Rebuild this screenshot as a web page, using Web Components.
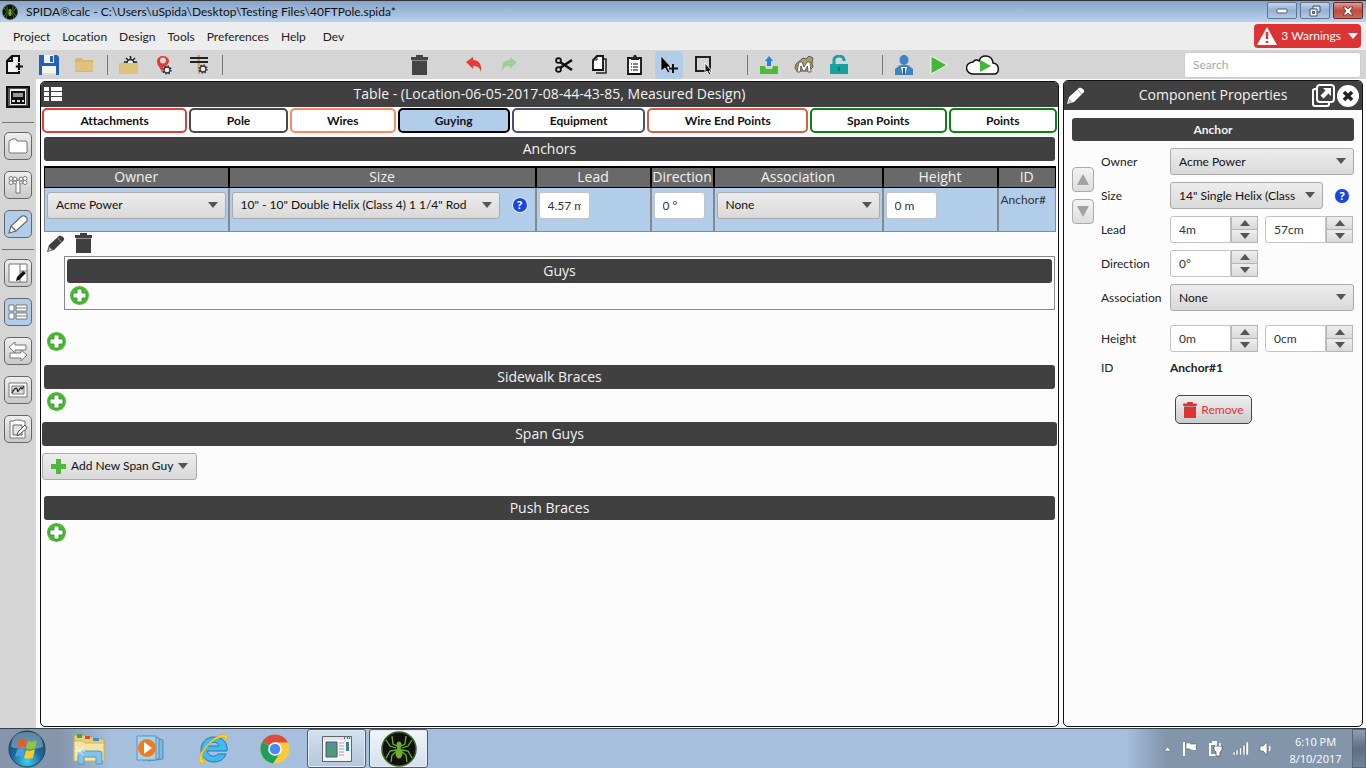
<!DOCTYPE html>
<html lang="en">
<head>
<meta charset="utf-8">
<title>SPIDA calc</title>
<style>
html,body{margin:0;height:100%}
body{font:12px/16px Lato,"Open Sans",sans-serif;font-variant-ligatures:none;color:#222;background:#fcfcfc}
</style>
</head>
<body>
<spida-app></spida-app>
<script>
const icons = {
  spider: [36,36,'<circle cx="18" cy="18" r="17" fill="#101010" stroke="#3f5f1c" stroke-width="1.5"/><g fill="none" stroke="#6cb02c" stroke-width="1.3"><path d="M16 15l-4-2-1-8M20 15l4-2 1-8M15 17l-6-2-4-6M21 17l6-2 4-6M15 19l-6 1-4 7M21 19l6 1 4 7M16 20l-5 4-1 7M20 20l5 4 1 7"/></g><ellipse cx="18" cy="14" rx="2.500" ry="3.500" fill="#6cb02c"/><ellipse cx="18" cy="22" rx="3.500" ry="5.500" fill="#6cb02c"/>'],
  newFile: [19,20,'<path d="M7 1h7v17H2V6z" fill="#f4f4f4"/><path d="M14 7V1H7L2 6v12h9M7 1v5H2M14 14v4h-3" fill="none" stroke="#111" stroke-width="2"/><path d="M14 7v9M10 11.500h9" stroke="#d5d5d5" stroke-width="4"/><path d="M14 8v7M11 11.500h7" stroke="#111" stroke-width="2"/>'],
  save: [20,20,'<path d="M0 0h18l2 2v18H0z" fill="#2261b8"/><path d="M5 0h10v8H5z" fill="#e9f1fb"/><path d="M11 1h3v6h-3z" fill="#2261b8"/><path d="M3 11h14v9H3z" fill="#f4f4f4"/><path d="M3 19h14" stroke="#c8c8c8"/>'],
  folder: [18,15,'<path d="M0 2h1l1-1h5l1 2h10v12H0z" fill="#d5b868"/><path d="M0 5h18v9H0z" fill="#dfc37c"/>'],
  folderGear: [20,19,'<path d="M0 8h3l2-2h14v13H0z" fill="#dcc27a"/><path d="M6 8a5 5 0 0 1 11 0z" fill="#eee"/><path d="M8 8a3.500 3.500 0 0 1 7 0" fill="none" stroke="#222" stroke-width="1.500"/><path d="M11.500 1v3M7 3l2 2M16 3l-2 2M5 7h3M15 7h3" stroke="#222" stroke-width="1.600"/>'],
  pinGear: [16,20,'<path d="M6 18C5 13 1 11 1 6a6 5 0 0 1 12 0c0 2-2 4-3 6" fill="#e4383a"/><circle cx="7" cy="5.500" r="3" fill="#d8d8d8"/><circle cx="11" cy="15" r="4.500" fill="#eee"/><circle cx="11" cy="15" r="3" fill="none" stroke="#333" stroke-width="1.300"/><circle cx="11" cy="15" r="4" fill="none" stroke="#333" stroke-width="1.500" stroke-dasharray="1.500 1.640"/>'],
  poleGear: [18,19,'<path d="M7 0h3v19H8z" fill="#d7a552"/><path d="M0 3h18M0 7h18" stroke="#222" stroke-width="2"/><circle cx="13" cy="14" r="4.500" fill="#e8e8e8"/><circle cx="13" cy="14" r="3" fill="none" stroke="#333" stroke-width="1.300"/><circle cx="13" cy="14" r="4" fill="none" stroke="#333" stroke-width="1.500" stroke-dasharray="1.500 1.640"/>'],
  trash: [17,20,'<path d="M5 0h7v2h5v3H0V2h5z" fill="currentColor"/><path d="M1 6h15v14H1z" fill="currentColor"/><path d="M1 5.500h15" stroke="#777" stroke-width=".8"/>'],
  undo: [16,15,'<path d="M0 5l7-5v3c6 0 9 4 8 12-1-4-3-6-8-6v3z" fill="currentColor"/>'],
  redo: [16,15,'<path d="M16 5L9 0v3C3 3 0 7 1 15c1-4 3-6 8-6v3z" fill="currentColor"/>'],
  cut: [18,16,'<g fill="none" stroke="#111"><circle cx="3.500" cy="3.500" r="2.400" stroke-width="1.800"/><circle cx="3.500" cy="12.500" r="2.400" stroke-width="1.800"/><path d="M5 5l12 8M5 11l12-8" stroke-width="2.700"/></g>'],
  copy: [15,19,'<path d="M5 4h9v14H4" fill="#ddd" stroke="#222" stroke-width="1.500"/><path d="M5 1h6v14H1V5z" fill="#fff" stroke="#111" stroke-width="1.800"/><path d="M5 1v4H1" fill="none" stroke="#111"/>'],
  paste: [15,20,'<path d="M1 3h13v16H1z" fill="#fff" stroke="#111" stroke-width="1.800"/><path d="M4 2h2l1-2h2l1 2h2v3H4z" fill="#222"/><path d="M4 9h1M6 9h5M4 12h1M6 12h5M4 15h1M6 15h5" stroke="#555" stroke-width="1.300"/>'],
  cursorPlus: [18,18,'<path d="M1 0l10 11H7l3 5-2 1-3-5-4 3z" fill="#000" stroke="#eee" stroke-width=".7"/><path d="M13 8v9M9 12.500h9" stroke="#111" stroke-width="2"/>'],
  marquee: [18,18,'<path d="M1 1h14v14H1z" fill="none" stroke="#222" stroke-width="2"/><path d="M10 7l7 8h-3l2 3-2 1-2-4-2 2z" fill="#111" stroke="#fff" stroke-width=".9"/>'],
  upload: [18,18,'<path d="M0 10h5l1 3h6l1-3h5v8H0z" fill="#4dba38"/><path d="M9 0l4 5h-2v5H7V5H5z" fill="#2482e4"/>'],
  model: [20,18,'<path d="M2 8l7-6 3 1 3-3 4 2-1 5 1 4-4 4H3L1 12z" fill="#b59a62" stroke="#555"/><path d="M3 16L5 6h3l2 5 3-5h3l1 10h-3l-.5-6-3 5H9L7 10l-1 6z" fill="#fff" stroke="#555" stroke-width=".9"/>'],
  unlock: [18,19,'<path d="M4 9V5a5 4 0 0 1 10 0v1" fill="none" stroke="#15a3a1" stroke-width="3"/><path d="M0 9h18v10H0z" fill="#15a3a1"/><path d="M9 12v4" stroke="#0b6c6d" stroke-width="2"/>'],
  person: [18,20,'<ellipse cx="9" cy="5" rx="4.500" ry="5" fill="#3f83c5"/><path d="M0 20v-6l5-4h8l5 4v6z" fill="#3f83c5"/><path d="M6 12h6l-2 8H8z" fill="#fff"/><path d="M8 13h2v7H8z" fill="#335f8e"/>'],
  play: [18,20,'<path d="M1 1l16 9-16 9z" fill="#45b538" stroke="#eef5ee"/>'],
  cloudPlay: [34,20,'<path d="M8 19a7 6 0 0 1-1-12C9 4 12 5 13 6c2-7 13-7 14 2 7 1 7 11 1 11z" fill="#fff" stroke="#111" stroke-width="1.500"/><path d="M14 5l11 6-11 6z" fill="#45b538"/>'],
  calc: [24,22,'<path d="M1 1h22v20H1z" fill="#555" stroke="#111" stroke-width="2"/><path d="M4 3h16v16H4z" fill="#eee"/><path d="M5 5h14v13H5z" fill="#111"/><path d="M7 7h10v4H7z" fill="#999"/><path d="M6 15h3M11 15h3M16 15h2" stroke="#ddd" stroke-width="2"/>'],
  files: [20,16,'<path d="M1 14V3l2-1 1-1h4l1 2h9l1 1v10l-1 1H2z" fill="#fff" stroke="#777"/>'],
  pole: [20,18,'<path d="M8 4h4v13H8z" fill="#fff" stroke="#777"/><g fill="#fff" stroke="#777"><circle cx="3" cy="2.500" r="2"/><circle cx="7" cy="3" r="2"/><circle cx="13" cy="3" r="2"/><circle cx="17" cy="2.500" r="2"/><circle cx="3" cy="6.500" r="2"/><circle cx="7" cy="6.500" r="1.500"/><circle cx="13" cy="6.500" r="1.500"/><circle cx="17" cy="6.500" r="2"/></g><path d="M3 4.500h14" stroke="#999"/>'],
  pencilLine: [20,19,'<path d="M1 18l2-7L14 1c3-1 6 2 5 5L8 16zM3 11l5 5" fill="#fff" stroke="#666" stroke-width="1.200"/>'],
  design: [20,20,'<path d="M1 1h18v18H1zM12 1v18M12 8h7" fill="#fff" stroke="#777"/><path d="M8 18l1-4 6-6 3 2-7 7z" fill="#111"/>'],
  listLine: [20,16,'<path d="M1 1h5v6H1zM8 1h11v6H8zM1 9h5v6H1zM8 9h11v6H8zM8 4h11M8 12h11" fill="#fff" stroke="#777"/>'],
  swap: [20,20,'<path d="M1 6l6-5v3h11v5H7v3zM19 14l-6-5v3H2v5h11v3z" fill="#fff" stroke="#777"/>'],
  chart: [20,16,'<path d="M1 1h18v14H1z" fill="#fff" stroke="#777"/><path d="M4 4h12v8H4z" fill="#ddd" stroke="#777"/><path d="M4 11c2-4 4-6 5-4s0 4 2 1 2-3 3-1l2-3" fill="none" stroke="#222" stroke-width="1.300"/>'],
  note: [20,20,'<path d="M2 2h4l1-1h6l1 1h3v17H2z" fill="#fff" stroke="#777"/><path d="M5 6h9v10H5z" fill="#e4e4e4" stroke="#666"/><path d="M9 17l1-4 7-7 2 3-7 6z" fill="#fff" stroke="#555"/>'],
  list: [18,15,'<path d="M0 0h5v4H0zM7 0h11v4H7zM0 5h5v4H0zM7 5h11v4H7zM0 10h5v4H0zM7 10h11v4H7z" fill="#fff"/>'],
  pencil: [18,17,'<path d="M0 17l2-7L12 1c2-1 6 2 5 4L7 15z" fill="currentColor"/><path d="M11 3l4 5" stroke="#999" stroke-width="1"/><path d="M1 16l1.500-4 3 3z" fill="#bbb"/>'],
  popout: [23,23,'<path d="M5 5H3q-2 0-2 2v13q0 2 2 2h12q2 0 2-2v-2" fill="none" stroke="#fff" stroke-width="2"/><rect x="5" y="1" width="17" height="17" rx="3" fill="#404040" stroke="#fff" stroke-width="2"/><path d="M11 4h8v8l-2.500-2.500-5 5-3-3 5-5z" fill="#fff"/>'],
  closeRound: [22,22,'<circle cx="11" cy="11" r="11" fill="#fff"/><path d="M7 7l8 8M15 7l-8 8" stroke="#222" stroke-width="3.500"/>'],
  addRound: [19,19,'<circle cx="9.500" cy="9.500" r="9.500" fill="#4cb935"/><path d="M7 3h5v4h4v5h-4v4H7v-4H3V7h4z" fill="#fff" stroke="#278d1d" stroke-width=".8"/>'],
  add: [15,15,'<path d="M5 0h5v5h5v5h-5v5H5v-5H0V5h5z" fill="#4db83d"/>'],
  down: [10,6,'<path d="M0 0h10L5 6z" fill="currentColor"/>'],
  up: [10,6,'<path d="M0 6h10L5 0z" fill="currentColor"/>'],
  bigUp: [12,11,'<path d="M0 11h12L6 0z" fill="#a2a2a2"/>'],
  bigDown: [12,11,'<path d="M0 0h12L6 11z" fill="#a2a2a2"/>'],
  warning: [20,18,'<path d="M10 0l10 18H0z" fill="#fff"/><path d="M10 5v7M10 14v2" stroke="#dc3334" stroke-width="2.500"/>'],
  minimize: [12,6,'<rect x="1" y="1" width="10" height="4" rx="1" fill="#fff" stroke="#4b5a70"/>'],
  restore: [12,12,'<path d="M4 1h7v6H4z" fill="#dbe6f3" stroke="#414f64"/><path d="M1 4h7v7H1z" fill="#fff" stroke="#414f64"/><path d="M3.500 6.500h2v2h-2z" fill="#9db4d0" stroke="#414f64"/>'],
  closeX: [12,10,'<path d="M1 1h3l2 2 2-2h3L8 5l3 4H8L6 7 4 9H1l3-4z" fill="#fff" stroke="#5c3a44" stroke-width=".9"/>'],
  start: [38,38,'<defs><radialGradient id="o" cx=".5" cy=".85" r=".9"><stop offset="0" stop-color="#3fd0ef"/><stop offset=".45" stop-color="#1b6b9d"/><stop offset="1" stop-color="#173a5c"/></radialGradient></defs><circle cx="19" cy="19" r="18" fill="url(#o)" stroke="#234058"/><path d="M3 17C3 5 11 2 19 2s16 3 16 15c-8 3-22 3-32 0z" fill="#b9d3e4" opacity=".45"/><path d="M11 10c3-2 5-1 8 0l-2 8c-3-2-5-2-8 0z" fill="#ea5a26"/><path d="M20 11c3 1 5 1 9-1l-2 8c-3 2-6 2-9 1z" fill="#8fc543"/><path d="M9 20c3-2 5-1 8 0l-2 8c-3-2-5-2-8-1z" fill="#4b9fdd"/><path d="M18 20c3 1 5 1 9-1l-2 9c-4 1-6 1-9 0z" fill="#fbc92c"/>'],
  explorer: [34,32,'<path d="M2 4l1-2h9l2 2h7l1 2h10v22H2z" fill="#e6cf7d" stroke="#c2a44b"/><path d="M5 1h5v4H5z" fill="#35a853"/><path d="M13 3h5v3h-5z" fill="#d94a35"/><path d="M21 5h6v3h-6z" fill="#3d8fd9"/><path d="M2 8h9l2 2h19v18H2z" fill="#f5e5a5" stroke="#d0b35e"/><path d="M6 31V20q0-2 3-2h18q3 0 3 2v11h-6v-7H12v7z" fill="#84c4e8" stroke="#4f9cc9"/><path d="M4 13l7 9M11 13l-6 9M3 18h10" stroke="#fff" stroke-width=".8"/>'],
  player: [30,27,'<path d="M12 2l15 3v19l-15 2z" fill="#7fb8dc" stroke="#4d8db8"/><path d="M7 1l16 2v21L7 25z" fill="#9bcae6" stroke="#4d8db8"/><path d="M1 1h19v24H1z" fill="#a8d2ea" stroke="#5595bd"/><circle cx="11" cy="13" r="9" fill="#f07a1c"/><path d="M8 7l8 6-8 6z" fill="#fff"/>'],
  ie: [32,31,'<path d="M10 18h20C31 9 25 4 17 4 9 4 4 10 4 17s6 12 13 12c6 0 10-3 12-8h-8c-3 4-10 2-11-3zM10 13c2-5 11-5 12 0z" fill="#45b8ee" stroke="#1c7cb8" fill-rule="evenodd"/><path d="M3 30C-3 23 19-2 29 2c3 1 1 5 0 7C29 5 27 3 22 5 13 8 2 22 6 27c1 1 2 1 4 1-2 2-5 3-7 2z" fill="#fbd12b" stroke="#d8a410" stroke-width=".6"/>'],
  chrome: [30,30,'<circle cx="15" cy="15" r="14.500" fill="#fcca3e"/><path d="M15 15L2.500 7.500A14.500 14.500 0 0 1 28 8.500H15z" fill="#dd4b3e"/><path d="M2.500 7.500A14.500 14.500 0 0 0 13 29.400L20 19z" fill="#21a05b"/><circle cx="15" cy="15" r="6.800" fill="#fff"/><circle cx="15" cy="15" r="5.300" fill="#4a8af4"/>'],
  windowApp: [30,26,'<path d="M.5.5h29v25H.5z" fill="#f3f3f3" stroke="#5c6670"/><path d="M1 1h28v3H1z" fill="#dfe5ea"/><path d="M22 2h1M25 2h1M27 2h1" stroke="#333" stroke-width="1.500"/><path d="M4 6h11v15H4z" fill="#4c9a78" stroke="#557"/><path d="M5 7h9v6z" fill="#5a88c0"/><path d="M17 7h5M17 10h5M17 13h5M17 16h5M17 19h5" stroke="#aaa"/><path d="M24 6h3v9h-3z" fill="#3f7fa5"/>'],
  trayUp: [9,6,'<path d="M1 5h7L4.500 1z" fill="#fff" stroke="#566679" stroke-width=".6"/>'],
  flag: [16,16,'<path d="M2 1v14" stroke="#fff" stroke-width="2"/><path d="M4 2q4-1 5 1h6q-2 3 0 6-3 1-6 0-2-2-5-1z" fill="#fff" stroke="#4d5b6d" stroke-width=".6"/>'],
  plug: [15,16,'<path d="M4 1h5M2 3h5M2 2v12h6" fill="none" stroke="#fff" stroke-width="2"/><path d="M6 5h8v4l-2 2v4H8v-4L6 9z" fill="#fff" stroke="#4d5b6d" stroke-width=".8"/><path d="M8 2v3M12 2v3" stroke="#fff" stroke-width="1.500"/>'],
  signal: [16,13,'<path d="M0 10h2v3H0zM3 8h2v5H3zM6.500 6h2v7h-2zM10 3h2v10h-2zM13 0h2.500v13H13z" fill="#fff" stroke="#4d5b6d" stroke-width=".4"/>'],
  speaker: [14,15,'<path d="M1 5h3l4-4v13l-4-4H1z" fill="#fff" stroke="#4d5b6d" stroke-width=".6"/><path d="M10 5q2 2 0 5" fill="none" stroke="#fff" stroke-width="1.300"/>'],
};

const icon = (name, size) => {
  const [w, h, body] = icons[name];
  return `<svg width="${size || w}" height="${size || h}" viewBox="0 0 ${w} ${h}" aria-hidden="true">${body}</svg>`;
};

const resetCss = `
*{box-sizing:border-box}
svg{display:block;flex:none}
button,input,select{font:inherit;font-variant-ligatures:inherit;color:inherit;margin:0}
button{border:0;padding:0;background:none;display:flex;align-items:center;justify-content:center}
`;
const controlsCss = `
.field{height:27px;min-width:0;border:1px solid #c4c4c4;border-radius:3px;background:#fff;padding:0 8px;color:#333}
.drop{position:relative;display:block;min-width:0}
.drop select{appearance:none;display:block;width:100%;height:27px;border:1px solid #aaa;border-radius:3px;padding:0 24px 0 8px;background:linear-gradient(#ededed,#d9d9d9);color:#111}
.drop svg{position:absolute;right:8px;top:10px;color:#555;pointer-events:none}
.help{width:14px;height:14px;border-radius:7px;background:#1747dc;color:#fff;font:bold 11px/14px "Open Sans",sans-serif;box-shadow:0 0 0 1px #dfe9fa}
`;
const drop = (id, label, value) =>
  `<span class="drop"><select id="${id}"${label ? ` aria-label="${label}"` : ''}><option>${value}</option></select>${icon('down')}</span>`;

function define(name, css, html) {
  const template = document.createElement('template');
  template.innerHTML = `<style>${resetCss}${css}</style>${html}`;
  customElements.define(name, class extends HTMLElement {
    constructor() {
      super();
      this.attachShadow({ mode: 'open' }).append(template.content.cloneNode(true));
    }
  });
}

define('title-bar', `
:host{display:flex;align-items:center;height:22px;padding:0 3px 0 2px;gap:8px;border-top:1px solid #333;background:linear-gradient(#86a4c9,#b9d2ec);color:#111}
h1{flex:1;margin:0;font:inherit;white-space:nowrap}
.win{display:flex;gap:3px;align-self:flex-start;padding-top:1px}
.win button{width:30px;height:17px;border:1px solid #5f7590;border-radius:2px;background:linear-gradient(#c3d6ec,#93afd1 50%,#b4cbe6)}
.win .close{border-color:#6b2630;background:linear-gradient(#dd9d92,#bf4b3a 50%,#c96a5b)}
`, `${icon('spider', 16)}<h1>SPIDA®calc - C:\\Users\\uSpida\\Desktop\\Testing Files\\40FTPole.spida*</h1>
<div class="win"><button aria-label="Minimize">${icon('minimize')}</button><button aria-label="Restore">${icon('restore')}</button><button class="close" aria-label="Close">${icon('closeX')}</button></div>`);

define('menu-bar', `
:host{display:flex;align-items:center;height:28px;padding:0 5px 0 13px;background:#ededed}
nav{display:flex;flex:1;gap:12px;padding-top:2px}
nav button:last-child{margin-left:5px}
.warn{height:24px;gap:4px;padding:0 3px;border-radius:4px;background:#dc3334;color:#fff}
.warn svg:last-child{margin-left:3px}
`, `<nav aria-label="Main">${['Project', 'Location', 'Design', 'Tools', 'Preferences', 'Help', 'Dev'].map(t => `<button>${t}</button>`).join('')}</nav>
<button class="warn">${icon('warning')}3 Warnings${icon('down')}</button>`);

const tools = list => list.map(([name, label, cls]) => `<button class="${cls || ''}" aria-label="${label}">${icon(name)}</button>`).join('');
define('tool-bar', `
:host{display:flex;align-items:center;height:29px;padding-right:5px;background:#d5d5d5}
.group{display:flex;gap:7px}
.group button{width:28px;height:28px;border-radius:4px}
.group .wide{width:36px;margin-left:5px}
.group .on{background:#b1cdea}
.sep{width:1px;height:20px;margin:0 7px 0 9px;background:#777}
.trash{margin-left:175px;color:#444}
.history{margin-left:27px}
.clip{margin-left:27px}
.clip + .sep,.share + .sep{margin-left:29px}
.red{color:#e43e39}.green{color:#9fce9c}
input{width:177px;height:26px;margin-left:auto;border:1px solid #ccc;border-radius:3px;padding:0 8px;background:#fff}
input::placeholder{color:#aaa}
`, `<div class="group">${tools([['newFile', 'New'], ['save', 'Save'], ['folder', 'Open']])}</div><span class="sep"></span>
<div class="group">${tools([['folderGear', 'Project settings'], ['pinGear', 'Location settings'], ['poleGear', 'Design settings']])}</div><span class="sep"></span>
<div class="group trash">${tools([['trash', 'Delete']])}</div>
<div class="group history">${tools([['undo', 'Undo', 'red'], ['redo', 'Redo', 'green']])}</div>
<div class="group clip">${tools([['cut', 'Cut'], ['copy', 'Copy'], ['paste', 'Paste'], ['cursorPlus', 'Select and add', 'on'], ['marquee', 'Area select']])}</div><span class="sep"></span>
<div class="group share">${tools([['upload', 'Upload'], ['model', 'Model'], ['unlock', 'Unlock']])}</div><span class="sep"></span>
<div class="group">${tools([['person', 'Engineer'], ['play', 'Run'], ['cloudPlay', 'Run in cloud', 'wide']])}</div>
<input type="search" placeholder="Search" aria-label="Search">`);

define('tool-rail', `
:host{display:flex;flex-direction:column;align-items:center;gap:11px;width:36px;padding-top:5px;background:#d5d5d5}
button{width:28px;height:28px;border:1px solid #666;border-radius:5px;background:linear-gradient(#eee,#c9c9c9)}
.plain{height:26px;border:0;background:none}
.on{background:#b1cdea}
hr{width:32px;height:1px;margin:0 0 -2px;border:0;background:#777}
.plain + hr{margin:1px 0 -2px}
`, `${tools([['calc', 'Calculator', 'plain']])}<hr>${tools([['files', 'Files'], ['pole', 'Pole view'], ['pencilLine', 'Edit', 'on']])}<hr>
${tools([['design', 'Design'], ['listLine', 'Table', 'on'], ['swap', 'Compare'], ['chart', 'Results'], ['note', 'Notes']])}`);

define('dock-panel', `
:host{display:flex;flex-direction:column;min-width:0;border:1px solid #111;border-radius:5px;overflow:hidden;background:#fcfcfc}
header{display:grid;grid-template-columns:46px 1fr 46px;align-items:center;height:var(--head,25px);padding:0 3px;background:#404040;color:#f2f2f2}
h2{margin:0;padding-bottom:2px;font:14px/20px "Open Sans",sans-serif;text-align:center;white-space:nowrap}
`, `<header><slot name="lead"></slot><h2><slot name="title"></slot></h2><slot name="actions"></slot></header><slot></slot>`);

define('section-bar', `
:host{display:block;height:24px;border-radius:3px;background:#404040;color:#f2f2f2;text-align:center;font:14px/24px "Open Sans",sans-serif}
:host([strong]){height:23px;font:bold 12px/23px Lato,sans-serif}
h3{margin:0;font:inherit}
`, `<h3><slot></slot></h3>`);

define('add-button', `:host{display:block;width:19px;height:19px;margin:3px 0 0 3px}`,
  `<button aria-label="Add">${icon('addRound')}</button>`);

define('design-tabs', `
:host{display:flex;gap:2px;padding:1px 1px 0}
button{flex:var(--w) 1 0;height:25px;border:2px solid var(--c);border-radius:5px;background:#fff;color:#111;font-weight:bold;white-space:nowrap}
.on{background:#b1cdea}
`, [['Attachments', 146, '#dc3f3f'], ['Pole', 98, '#484848'], ['Wires', 105, '#ff8563'], ['Guying', 112, '#000'], ['Equipment', 134, '#46516b'], ['Wire End Points', 162, '#d15f4b'], ['Span Points', 137, '#0a8210'], ['Points', 108, '#0a8210']]
  .map(([t, w, c]) => `<button style="--w:${w};--c:${c}"${c === '#000' ? ' class="on"' : ''}>${t}</button>`).join(''));

define('anchor-table', `${controlsCss}
:host{display:block}
table{width:100%;table-layout:fixed;border-collapse:collapse}
th{height:20px;padding:0;border:2px solid #000;border-bottom-width:1px;background:#696969;color:#f2f2f2;font:14px/18px "Open Sans",sans-serif;white-space:nowrap}
th:first-child{border-left-width:1px}th:last-child{border-right-width:1px}
td{height:44px;padding:4px 2px 0;border:2px solid #888;border-top-width:1px;border-bottom-width:1px;background:#b1cdea;vertical-align:top;color:#333}
td:first-child{border-left-width:1px}td:last-child{border-right-width:1px}
.size{display:grid;grid-template-columns:1fr 14px;gap:13px;align-items:center;padding-right:6px}
.field{display:block;width:51px}
`, `<table><colgroup>${[184, 307, 115, 63, 169, 115, 58].map(w => `<col style="width:${w}px">`).join('')}</colgroup>
<thead><tr>${['Owner', 'Size', 'Lead', 'Direction', 'Association', 'Height', 'ID'].map(t => `<th>${t}</th>`).join('')}</tr></thead>
<tbody><tr><td>${drop('owner', 'Owner', 'Acme Power')}</td>
<td><div class="size">${drop('size', 'Size', '10" - 10" Double Helix (Class 4) 1 1/4" Rod')}<button class="help" aria-label="Help">?</button></div></td>
<td><input class="field" aria-label="Lead" value="4.57 m"></td><td><input class="field" aria-label="Direction" value="0 °"></td>
<td>${drop('assoc', 'Association', 'None')}</td><td><input class="field" aria-label="Height" value="0 m"></td><td>Anchor#</td></tr></tbody></table>`);

define('guying-view', `
:host{display:flex;flex-direction:column;flex:1;padding:0 3px}
anchor-table{margin-top:5px}
.wide{margin:0 -2px}
.tools{display:flex;gap:9px;padding:2px 3px 3px}
.tools button{width:18px;height:19px;color:#3f3f3f}
.box{margin-left:20px;height:54px;border:1px solid #888;padding:2px}
.menu{align-self:flex-start;height:27px;margin:7px 0 16px -2px;padding:0 8px;gap:5px;border:1px solid #aaa;border-radius:3px;background:linear-gradient(#ededed,#d9d9d9);color:#111}
.menu svg:last-child{color:#555}
.first{margin-top:4px}
.after-guys{margin:22px 0 14px 3px}
.after-braces{margin-bottom:11px}
`, `<section-bar class="first">Anchors</section-bar><anchor-table></anchor-table>
<div class="tools"><button aria-label="Edit">${icon('pencil')}</button><button aria-label="Delete">${icon('trash')}</button></div>
<div class="box"><section-bar>Guys</section-bar><add-button></add-button></div>
<add-button class="after-guys"></add-button>
<section-bar>Sidewalk Braces</section-bar><add-button class="after-braces"></add-button>
<section-bar class="wide">Span Guys</section-bar>
<button class="menu">${icon('add')}Add New Span Guy${icon('down')}</button>
<section-bar>Push Braces</section-bar><add-button></add-button>`);

const spin = (id, label, value) => `<span class="spin"><input class="field" id="${id}" aria-label="${label}" value="${value}"><span><button aria-label="Increase ${label}">${icon('up')}</button><button aria-label="Decrease ${label}">${icon('down')}</button></span></span>`;
define('property-form', `${controlsCss}
:host{display:block;padding:8px 8px 0}
.body{display:grid;grid-template-columns:29px 69px 1fr;align-items:start;margin-top:7px}
.order{display:grid;gap:7px;padding-top:19px}
.order button{width:22px;height:25px;border:1px solid #aaa;border-radius:4px;background:linear-gradient(#f3f3f3,#ddd)}
.rows{grid-column:2 / 4;display:grid;grid-template-columns:69px 1fr;row-gap:7px;align-items:center}
.rows > label{line-height:27px;white-space:nowrap}
.rows > span:not(.drop),b{line-height:18px}
.size{display:grid;grid-template-columns:1fr 14px;gap:12px;align-items:center;padding-right:5px}
.pair{display:grid;grid-template-columns:88px 88px;gap:7px}
.spin{display:grid;grid-template-columns:1fr 27px}
.spin .field{width:100%;border-radius:3px 0 0 3px}
.spin > span{display:grid}
.spin button{border:1px solid #b5b5b5;background:linear-gradient(#eee,#d9d9d9);color:#555;height:14px}
.spin button + button{height:13px;border-top:0}
.gap{margin-top:7px}
.remove{width:77px;height:29px;margin:18px 0 0 103px;gap:4px;border:1px solid #444;border-radius:5px;background:linear-gradient(#f0f0f0,#ccc);color:#df3331}
.remove svg{width:14px;height:16px}
`, `<section-bar strong>Anchor</section-bar><div class="body">
<div class="order"><button aria-label="Previous">${icon('bigUp')}</button><button aria-label="Next">${icon('bigDown')}</button></div>
<div class="rows"><label for="p-owner">Owner</label>${drop('p-owner', '', 'Acme Power')}
<label for="p-size">Size</label><div class="size">${drop('p-size', '', '14" Single Helix (Class')}<button class="help" aria-label="Help">?</button></div>
<label for="p-lead">Lead</label><div class="pair">${spin('p-lead', 'Lead', '4m')}${spin('p-lead2', 'Lead centimetres', '57cm')}</div>
<label for="p-dir">Direction</label><div class="pair">${spin('p-dir', 'Direction', '0°')}</div>
<label for="p-assoc">Association</label>${drop('p-assoc', '', 'None')}
<label class="gap" for="p-height">Height</label><div class="pair gap">${spin('p-height', 'Height', '0m')}${spin('p-height2', 'Height centimetres', '0cm')}</div>
<span>ID</span><b>Anchor#1</b></div></div>
<button class="remove">${icon('trash')}Remove</button>`);

define('task-bar', `
:host{display:flex;align-items:stretch;height:40px;border-top:1px solid #35404c;background:linear-gradient(90deg,#8495ac 0,#8495ac 60px,#a6bfdc 110px,#a6bfdc calc(100% - 240px),#8295ab calc(100% - 200px));color:#fff}
.start{width:54px;margin-right:5px}
.apps{display:flex;flex:1;gap:3px}
.apps button{width:59px;border:1px solid transparent;border-radius:3px}
.apps .open{border-color:#4b5c72;background:linear-gradient(#d3e0ee,#b3c7de);box-shadow:inset 0 0 0 1px #e4edf6}
.apps .front{background:linear-gradient(#f1f5fa,#d3dfee)}
.tray{display:flex;align-items:center;gap:10px;margin-right:6px}
time{width:73px;padding-top:4px;text-align:center;font:11px/17px "Open Sans",sans-serif}
.peek{width:14px;border:1px solid #56677c;background:linear-gradient(#8f9fb2,#5c6e84 50%,#72849a)}
`, `<button class="start" aria-label="Start">${icon('start')}</button>
<div class="apps">${tools([['explorer', 'Explorer'], ['player', 'Media player'], ['ie', 'Internet Explorer'], ['chrome', 'Chrome'], ['windowApp', 'Program', 'open'], ['spider', 'SPIDAcalc', 'open front']])}</div>
<div class="tray">${['trayUp', 'flag', 'plug', 'signal', 'speaker'].map(n => icon(n)).join('')}</div>
<time>6:10 PM<br>8/10/2017</time><button class="peek" aria-label="Show desktop"></button>`);

define('spida-app', `
:host{display:grid;grid-template-rows:auto auto auto 1fr auto;min-height:100vh;background:#fcfcfc}
main{display:grid;grid-template-columns:36px 1fr 300px;gap:4px;padding-right:3px}
dock-panel{margin:2px 0 1px}
.props{--head:29px;margin-top:1px}
[slot=actions]{display:flex;gap:2px;justify-content:flex-end}
[slot=lead]{color:#fff}
`, `<title-bar></title-bar><menu-bar></menu-bar><tool-bar></tool-bar>
<main><tool-rail></tool-rail>
<dock-panel><span slot="lead">${icon('list')}</span><span slot="title">Table - (Location-06-05-2017-08-44-43-85, Measured Design)</span><design-tabs></design-tabs><guying-view></guying-view></dock-panel>
<dock-panel class="props"><span slot="lead">${icon('pencil')}</span><span slot="title">Component Properties</span><span slot="actions"><button aria-label="Pop out">${icon('popout')}</button><button aria-label="Close">${icon('closeRound')}</button></span><property-form></property-form></dock-panel>
</main><task-bar></task-bar>`);
</script>
</body>
</html>
